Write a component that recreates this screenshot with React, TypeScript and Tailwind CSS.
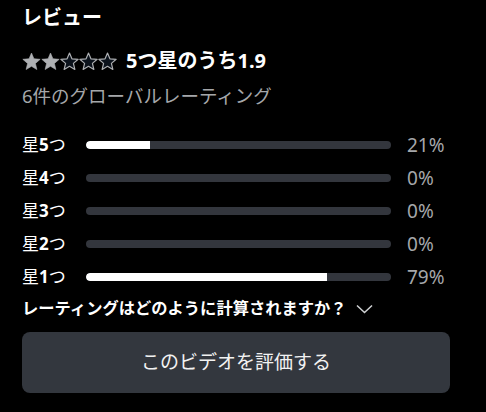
const rows = [
  { label: "5", pct: 21 },
  { label: "4", pct: 0 },
  { label: "3", pct: 0 },
  { label: "2", pct: 0 },
  { label: "1", pct: 79 },
];

function Star({ filled }: { filled: boolean }) {
  return (
    <svg width="19" height="19" viewBox="0 0 24 24">
      <path
        d="M12 1.3L15.06 8.59L22.94 9.25L16.95 14.41L18.76 22.1L12 18L5.24 22.1L7.05 14.41L1.06 9.25L8.94 8.59Z"
        fill={filled ? "#aeb0b3" : "#0b121b"}
        stroke="#aeb0b3"
        strokeWidth={filled ? 0.8 : 1.5}
        strokeLinejoin="round"
      />
    </svg>
  );
}

export default function App() {
  return (
    <div
      className="min-h-screen bg-black text-white px-[22px] pt-[6px]"
      style={{ fontFamily: '"Noto Sans", "Noto Sans CJK JP", sans-serif' }}
    >
      <h2 className="text-[20px] font-bold leading-[24px]">レビュー</h2>

      <div className="flex items-center mt-[19px] h-[24px]">
        <div className="flex gap-0">
          {[0, 1, 2, 3, 4].map((i) => (
            <Star key={i} filled={i < 2} />
          ))}
        </div>
        <span className="ml-[9px] text-[20px] font-bold">5つ星のうち1.9</span>
      </div>

      <div className="mt-[10px] text-[18.5px] text-[#a5a7aa] leading-[26px]">
        6件のグローバルレーティング
      </div>

      <div className="mt-[24px] flex flex-col gap-[9px]">
        {rows.map((r) => (
          <div key={r.label} className="flex items-center h-[24px]">
            <span className="w-[64px] text-[17px]">
              星<span className="font-bold">{r.label}</span>つ
            </span>
            <div className="w-[305px] h-[8px] rounded-full bg-[#33363d] overflow-hidden">
              <div className="h-full bg-white rounded-l-full" style={{ width: `${r.pct}%` }} />
            </div>
            <span className="ml-[16px] text-[19px] text-[#a5a7aa]">{r.pct}%</span>
          </div>
        ))}
      </div>

      <button className="mt-[7px] flex items-center gap-[9px] text-[16.3px] font-bold h-[24px]">
        レーティングはどのように計算されますか？
        <svg width="17" height="10" viewBox="0 0 17 10" className="mt-[2px]">
          <polyline points="1,1.5 8.5,8.5 16,1.5" fill="none" stroke="#d0d2d4" strokeWidth="1.5" />
        </svg>
      </button>

      <button className="mt-[12px] w-[428px] h-[61px] rounded-[8px] bg-[#33373e] text-[19px] text-[#f2f2f2]">
        このビデオを評価する
      </button>
    </div>
  );
}
